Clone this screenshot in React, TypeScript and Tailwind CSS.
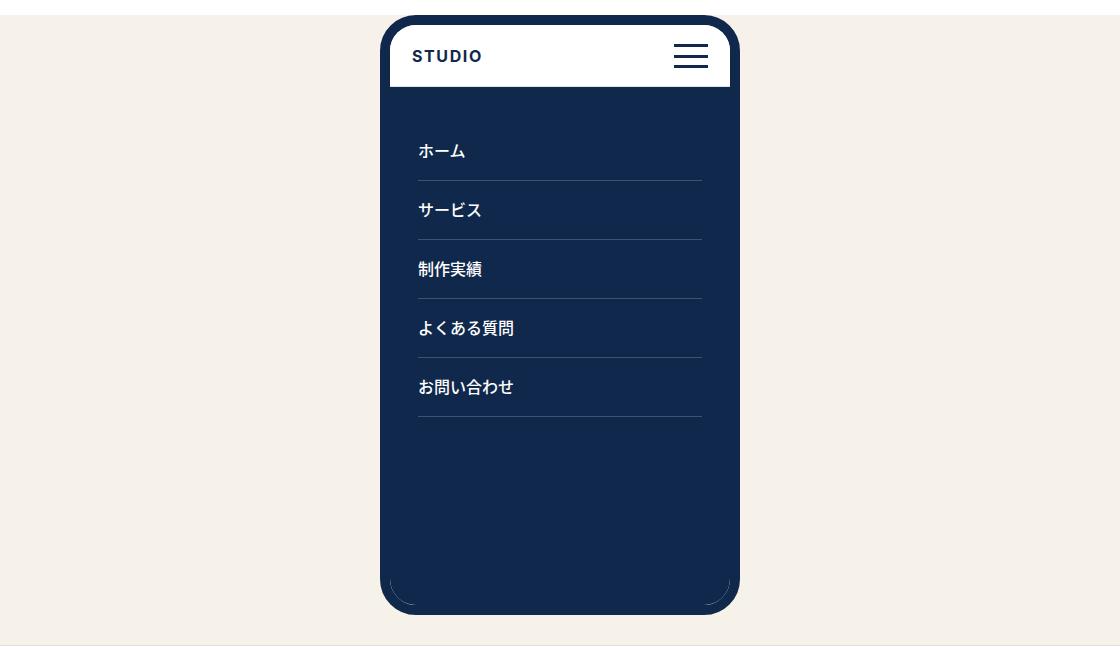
const links = [
  { href: "#home", label: "ホーム" },
  { href: "#service", label: "サービス" },
  { href: "#works", label: "制作実績" },
  { href: "#faq", label: "よくある質問" },
  { href: "#contact", label: "お問い合わせ" },
]

function Header() {
  return (
    <header className="flex items-center justify-between border-b border-[#dbe3ea] bg-white px-[22px] pt-[19px] pb-[18px]">
      <a href="#home" className="font-[Inter,'Liberation_Sans',sans-serif] text-base leading-6 font-bold tracking-widest">
        STUDIO
      </a>
      <button type="button" aria-label="メニュー" aria-expanded="true" className="flex h-6 w-[34px] flex-col justify-between">
        <span className="h-[3px] w-full bg-[#10284c]" />
        <span className="h-[3px] w-full bg-[#10284c]" />
        <span className="h-[3px] w-full bg-[#10284c]" />
      </button>
    </header>
  )
}

function Menu() {
  return (
    <nav className="flex-1 bg-[#10284c] px-7 pt-[35px]">
      <ul>
        {links.map((link) => (
          <li key={link.href} className="border-b border-white/20">
            <a href={link.href} className="block pt-4 pb-[18px] text-base leading-6 font-medium text-white">
              {link.label}
            </a>
          </li>
        ))}
      </ul>
    </nav>
  )
}

export default function App() {
  return (
    <div className="bg-white pt-[15px] font-['Noto_Sans_CJK_JP',sans-serif] text-[#10284c]">
      <main className="flex justify-center border-b border-[#dedede] bg-[#f6f1e9] pb-[30px]">
        {/* Phone frame */}
        <div className="flex min-h-[600px] w-full max-w-[360px] flex-col overflow-hidden rounded-[36px] border-10 border-[#10284c] bg-white">
          <Header />
          <Menu />
        </div>
      </main>
    </div>
  )
}
